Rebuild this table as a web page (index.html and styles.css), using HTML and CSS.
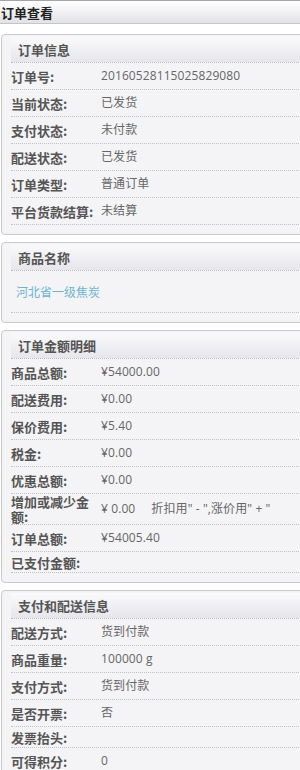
FILE: index.html
```html
<!DOCTYPE html>
<html lang="zh-CN">
<head>
<meta charset="utf-8">
<title>订单查看</title>
<link rel="stylesheet" href="styles.css">
</head>
<body>
<div class="page">
  <div class="page-head">订单查看</div>

  <section class="panel">
    <h2 class="panel-title">订单信息</h2>
    <div class="row"><span class="label">订单号:</span><span class="value">20160528115025829080</span></div>
    <div class="row"><span class="label">当前状态:</span><span class="value">已发货</span></div>
    <div class="row"><span class="label">支付状态:</span><span class="value">未付款</span></div>
    <div class="row"><span class="label">配送状态:</span><span class="value">已发货</span></div>
    <div class="row"><span class="label">订单类型:</span><span class="value">普通订单</span></div>
    <div class="row"><span class="label">平台货款结算:</span><span class="value">未结算</span></div>
  </section>

  <section class="panel">
    <h2 class="panel-title">商品名称</h2>
    <div class="row row-link"><a class="goods-link" href="#">河北省一级焦炭</a></div>
  </section>

  <section class="panel">
    <h2 class="panel-title">订单金额明细</h2>
    <div class="row"><span class="label">商品总额:</span><span class="value">¥54000.00</span></div>
    <div class="row"><span class="label">配送费用:</span><span class="value">¥0.00</span></div>
    <div class="row"><span class="label">保价费用:</span><span class="value">¥5.40</span></div>
    <div class="row"><span class="label">税金:</span><span class="value">¥0.00</span></div>
    <div class="row"><span class="label">优惠总额:</span><span class="value">¥0.00</span></div>
    <div class="row"><span class="label">增加或减少金额:</span><span class="value"><span class="adjust">¥ 0.00</span>折扣用" - ",涨价用" + "</span></div>
    <div class="row"><span class="label">订单总额:</span><span class="value">¥54005.40</span></div>
    <div class="row"><span class="label">已支付金额:</span><span class="value"></span></div>
  </section>

  <section class="panel">
    <h2 class="panel-title">支付和配送信息</h2>
    <div class="row"><span class="label">配送方式:</span><span class="value">货到付款</span></div>
    <div class="row"><span class="label">商品重量:</span><span class="value">100000 g</span></div>
    <div class="row"><span class="label">支付方式:</span><span class="value">货到付款</span></div>
    <div class="row"><span class="label">是否开票:</span><span class="value">否</span></div>
    <div class="row"><span class="label">发票抬头:</span><span class="value"></span></div>
    <div class="row"><span class="label">可得积分:</span><span class="value">0</span></div>
  </section>
</div>
</body>
</html>
```

FILE: styles.css
```css
html {
  overflow: hidden;
}

body {
  margin: 0;
  background: #fff;
  font-family: "Noto Sans CJK SC", "Noto Sans", sans-serif;
  font-size: 12px;
  color: #666;
}

.page {
  width: 320px;
}

/* page header bar */
.page-head {
  height: 22px;
  padding-left: 1px;
  border-top: 1px solid #a4a4ac;
  border-bottom: 1px solid #c4c4ca;
  background: linear-gradient(#ffffff, #e2e2e7);
  font-size: 13px;
  font-weight: 700;
  line-height: 24px;
  color: #222;
  margin-bottom: 10px;
}

/* section boxes */
.panel {
  margin: 0 0 7px 1px;
  padding: 2px 0 9px 9px;
  border: 1px solid #c9c9cb;
  border-radius: 4px;
  background: #f4f4f6;
}

.panel-title {
  margin: 0;
  height: 25px;
  padding-left: 7px;
  border-bottom: 1px dotted #b8b8c2;
  background: linear-gradient(#fafafc, #e6e6eb);
  font-size: 13px;
  font-weight: 700;
  line-height: 26px;
  color: #555;
}

.row {
  display: flex;
  align-items: center;
  min-height: 20px;
  border-bottom: 1px dotted #c0c0c8;
}

.label {
  flex: 0 0 90px;
  width: 90px;
  font-size: 13px;
  font-weight: 700;
  line-height: 15px;
  color: #555;
}

.value {
  font-family: "Open Sans", "Noto Sans CJK SC", sans-serif;
  font-size: 12px;
  line-height: 26px;
  color: #666;
  letter-spacing: 0.1px;
}

.adjust {
  margin-right: 16px;
}

.row-link {
  height: 41px;
  padding-left: 5px;
}

.goods-link {
  font-size: 12px;
  color: #6cb4cf;
  text-decoration: none;
}
```
